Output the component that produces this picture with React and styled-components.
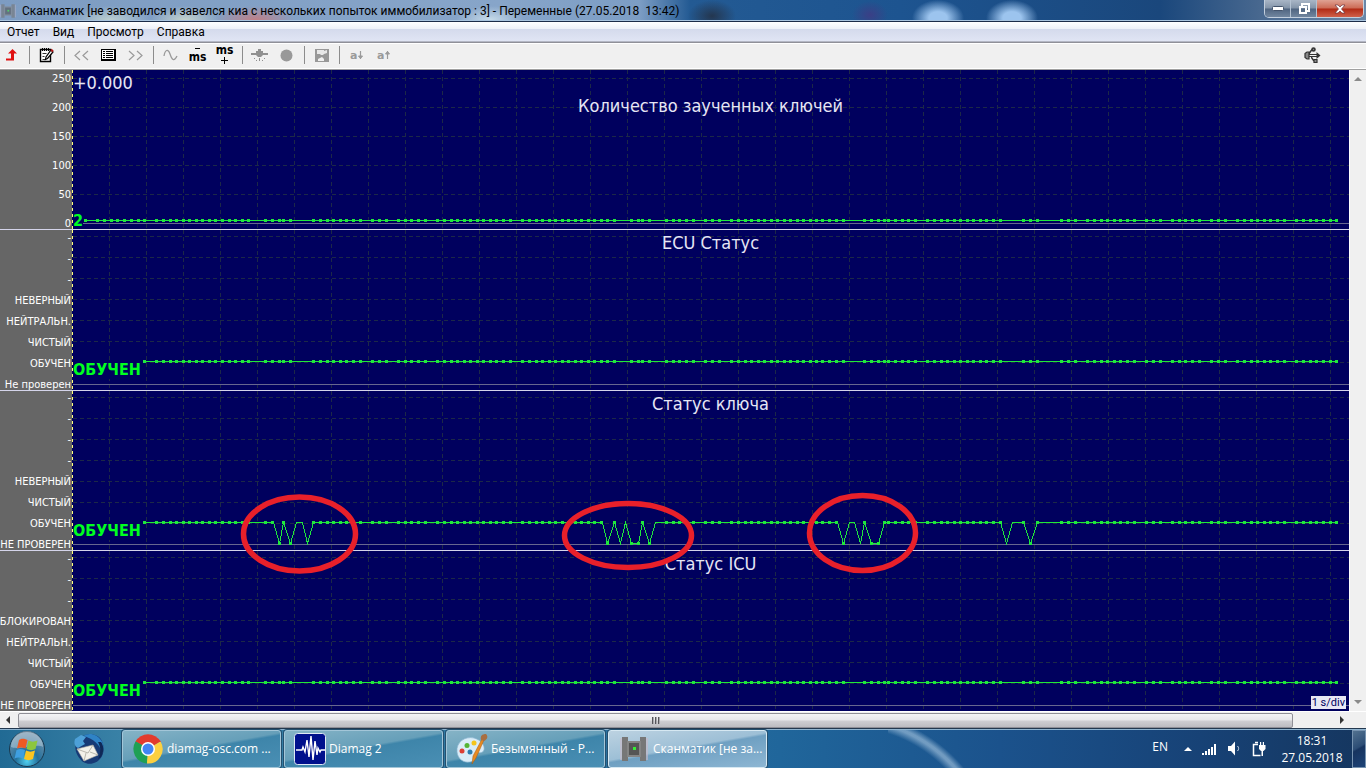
import React from "react";
import styled, { createGlobalStyle } from "styled-components";

const GlobalStyle = createGlobalStyle`
  * {
    box-sizing: border-box;
  }
  body {
    margin: 0;
    background: #00005e;
    font-family: "Open Sans", "Noto Sans", sans-serif;
    font-size: 12px;
  }
  button {
    margin: 0;
    padding: 0;
    border: 0;
    background: none;
    font: inherit;
    color: inherit;
  }
  svg {
    display: block;
  }
`;

const TAHOMA = `"DejaVu Sans Condensed", "DejaVu Sans", sans-serif`;
const NARROW = `Roboto, "Noto Sans", sans-serif`;

const Window = styled.div`
  display: flex;
  flex-direction: column;
  min-height: 100vh;
`;

/* ---------- title bar ---------- */

const TitleBar = styled.header`
  display: flex;
  align-items: flex-start;
  height: 22px;
  overflow: hidden;
  border-bottom: 1px solid #1c2c48;
  box-shadow: inset 0 -1px 0 #a9c4de;
  background:
    radial-gradient(ellipse 24px 16px at 712px 16px, #24364f, transparent),
    radial-gradient(ellipse 18px 14px at 870px 15px, #3a3f86, transparent),
    radial-gradient(ellipse 26px 18px at 938px 18px, #9cc4ee 35%, transparent),
    radial-gradient(ellipse 26px 18px at 1012px 18px, #9cc4ee 35%, transparent),
    radial-gradient(ellipse 40px 14px at 255px 20px, #c07f86, transparent),
    radial-gradient(ellipse 40px 14px at 110px 20px, #bccfd0, transparent),
    radial-gradient(ellipse 34px 14px at 185px 20px, #c5d3cc, transparent),
    radial-gradient(ellipse 34px 14px at 490px 20px, #c8dcea, transparent),
    linear-gradient(
      90deg,
      #7d9cc2 0,
      #87a5c9 500px,
      #7c9dc4 640px,
      #235a93 690px,
      #1d5490 900px,
      #1a477c 1160px,
      #48688f 1260px,
      #6a87a8 100%
    );
`;

const Caption = styled.h1`
  flex: 1;
  margin: 0 0 0 6px;
  color: #000;
  font-family: ${NARROW};
  font-size: 12px;
  font-weight: 400;
  line-height: 22px;
  white-space: pre;
`;

const AppIcon = styled.span`
  margin-top: 3px;
  opacity: 0.6;
`;

const CaptionButtons = styled.div`
  display: flex;
  height: 18px;
  margin-right: 2px;
  border: 1px solid #c3cfdd;
  border-top: 0;
  border-radius: 0 0 5px 5px;
  overflow: hidden;
`;

const CaptionButton = styled.button`
  display: flex;
  align-items: center;
  justify-content: center;
  width: ${(p) => (p.$close ? 46 : 26)}px;
  border-right: ${(p) => (p.$close ? "0" : "1px solid #b4c2d2")};
  background: ${(p) =>
    p.$close
      ? "linear-gradient(#dfa293 0, #cc6a55 48%, #b12a15 52%, #d0604a 100%)"
      : "linear-gradient(#a9b6c6 0, #8394a9 48%, #4f6480 52%, #71869f 100%)"};
`;

/* ---------- menu and toolbar ---------- */

const MenuBar = styled.nav`
  display: flex;
  height: 20px;
  padding-left: 1px;
  border-bottom: 1px solid #b4b7c4;
  background: linear-gradient(#fff 0, #eef1f8 35%, #d4daec 36%, #e0e5f4 100%);
`;

const MenuItem = styled.button`
  padding: 0 6px;
  margin-right: 1px;
  color: #000;
  font-family: ${NARROW};
  line-height: 20px;
`;

const Toolbar = styled.div`
  display: flex;
  align-items: center;
  height: 28px;
  padding-bottom: 2px;
  border-top: 1px solid #8f9098;
  border-bottom: 1px solid #a0a0a0;
  box-shadow: inset 0 1px 0 #fff, inset 0 -1px 0 #fff;
  background: #f0f0f0;
`;

const ToolGroup = styled.div`
  display: flex;
  align-items: center;
  flex: 1;
  margin-left: -2px;
`;

const ToolButton = styled.button`
  display: flex;
  align-items: center;
  justify-content: center;
  width: 27px;
  height: 24px;
`;

const ToolSeparator = styled.span`
  width: 8px;
  height: 18px;
  background: linear-gradient(#8c8c8c, #8c8c8c) center / 1px 100% no-repeat;
`;

const UsbStatus = styled.div`
  margin-right: 45px;
`;

/* ---------- chart ---------- */

const Workspace = styled.main`
  display: flex;
  flex: 1;
`;

const Chart = styled.div`
  position: relative;
  display: flex;
  flex: 1;
  flex-direction: column;
  min-width: 0;
  background: #00005e;
`;

const Panel = styled.section`
  display: flex;
  flex: ${(p) => (p.$last ? "1 0 auto" : "none")};
  height: ${(p) => p.$height}px;
  border-bottom: ${(p) => (p.$last ? "0" : "1px solid #d4d4ea")};
`;

const Axis = styled.ul`
  display: flex;
  flex-direction: column;
  justify-content: flex-end;
  width: 72px;
  margin: 0;
  padding: 0 1px 0 0;
  overflow: hidden;
  list-style: none;
  background: #666;
  color: #fff;
  font-family: ${TAHOMA};
  font-size: 11px;
  line-height: 10px;
`;

const Tick = styled.li`
  flex: none;
  display: flex;
  justify-content: flex-end;
  height: ${(p) => p.$step}px;
  padding-top: ${(p) => Math.ceil((p.$step - 10) / 2)}px;
  white-space: nowrap;

  &:last-child {
    height: auto;
  }
`;

const Plot = styled.div`
  position: relative;
  flex: 1;
  min-width: 0;
  overflow: hidden;
`;

const Canvas = styled.svg`
  position: absolute;
  inset: 0;
  width: 100%;
  height: 100%;
`;

const CursorTime = styled.div`
  position: relative;
  height: 23px;
  padding-left: 1px;
  color: #e6e6f5;
  font-family: ${TAHOMA};
  font-size: 18px;
  line-height: 25px;
`;

const PanelTitle = styled.h2`
  position: relative;
  margin: 0;
  color: #e6e6f5;
  font-family: ${TAHOMA};
  font-size: 18px;
  font-weight: 400;
  line-height: 25px;
  text-align: center;
`;

const CurrentValue = styled.div`
  position: absolute;
  top: ${(p) => p.$top}px;
  left: 1px;
  background: #00005e;
  color: #00ff20;
  font-family: ${TAHOMA};
  font-size: 16px;
  font-weight: 700;
  line-height: 18px;
`;

const ScaleBadge = styled.div`
  position: absolute;
  right: 3px;
  bottom: 2px;
  padding: 0 1px;
  background: #e8e8f4;
  color: #00005e;
  font-family: ${NARROW};
  font-size: 11px;
  line-height: 13px;
`;

const Marks = styled.svg`
  position: absolute;
  inset: 0;
  width: 100%;
  height: 100%;
  pointer-events: none;
`;

/* ---------- scroll bars ---------- */

const VScroll = styled.div`
  display: flex;
  flex-direction: column;
  justify-content: space-between;
  align-items: center;
  width: 17px;
  padding: 5px 0;
  border-left: 1px solid #fff;
  background: #f0f0f0;
`;

const HScroll = styled.div`
  display: flex;
  align-items: center;
  height: 17px;
  padding-right: 17px;
  border-top: 1px solid #fff;
  background: #f0f0f0;
`;

const ScrollButton = styled.button`
  display: flex;
  align-items: center;
  justify-content: center;
  width: 17px;
  height: 8px;
`;

const Track = styled.div`
  flex: 1;
  padding: 0 39px 0 1px;
`;

const Thumb = styled.div`
  display: flex;
  align-items: center;
  justify-content: center;
  gap: 1px;
  height: 15px;
  border: 1px solid #8f8f96;
  border-radius: 2px;
  background: linear-gradient(#f4f4f5 0, #e6e6e9 48%, #cfcfd3 52%, #bcbcc1 100%);
`;

const Grip = styled.span`
  width: 2px;
  height: 7px;
  background: linear-gradient(90deg, #55555a 50%, #a8a8ad 50%);
`;

/* ---------- taskbar ---------- */

const Taskbar = styled.footer`
  display: flex;
  align-items: center;
  height: 40px;
  border-top: 1px solid #22384f;
  box-shadow: inset 0 1px 0 #8fb4d0;
  overflow: hidden;
  background:
    radial-gradient(
        circle at -42px 136px,
        transparent 138px,
        rgba(170, 200, 225, 0.6) 145px,
        rgba(170, 200, 225, 0.6) 147px,
        transparent 153px
      )
      888px 0 / 90px 40px no-repeat,
    linear-gradient(
      90deg,
      #216a94 0,
      #3981a6 120px,
      #2e77a2 500px,
      #20669b 780px,
      #1b528c 1000px,
      #174276 1200px,
      #15365f 100%
    );
  color: #fff;
`;

const OrbButton = styled.button`
  width: 54px;
  padding-left: 8px;
`;

const PinnedButton = styled.button`
  width: 68px;
  padding-left: 19px;
`;

const TaskList = styled.div`
  display: flex;
  flex: 1;
  gap: 3px;
`;

const TaskButton = styled.button`
  display: flex;
  align-items: center;
  gap: 3px;
  width: 159px;
  height: 38px;
  padding: 0 0 0 9px;
  border: 1px solid ${(p) => (p.$active ? "#d6e8f2" : "#a3c6d8")};
  border-radius: 3px;
  box-shadow: 0 0 0 1px #24506f;
  background: ${(p) =>
    p.$active
      ? "linear-gradient(170deg, #bcd2e1 0, #9dbfd6 46%, #6fa0c2 50%, #8db6d3 100%)"
      : "linear-gradient(170deg, #85b3c6 0, #669fb9 46%, #3e85aa 50%, #4a8fb4 100%)"};
  text-align: left;
  white-space: nowrap;
`;

const TaskIcon = styled.span`
  display: flex;
  justify-content: center;
  width: 32px;
`;

const Tray = styled.div`
  display: flex;
  align-items: center;
  gap: 10px;
`;

const Language = styled.button`
  margin: 0 6px 5px 0;
`;

const Clock = styled.time`
  width: 80px;
  margin-left: 6px;
  line-height: 17px;
  text-align: center;
`;

const ShowDesktop = styled.button`
  width: 14px;
  height: 38px;
  border: 1px solid #7793b0;
  background: linear-gradient(150deg, #52718f 0, #2c4d75 45%, #17345f 50%, #1d4377);
`;

/* ---------- data ---------- */

const PLOT_X = 72;

// sample positions along the time axis
const SAMPLES = [
  144, 156, 163, 170, 176, 183, 189, 196, 202, 209, 215, 222, 229, 235, 242, 248,
  265, 272, 279, 283, 290, 313, 320, 327, 333, 340, 346, 353, 360, 372, 379, 386,
  398, 405, 411, 418, 425, 437, 444, 451, 457, 464, 470, 477, 483, 490, 496, 503,
  510, 522, 529, 536, 542, 549, 555, 562, 568, 575, 581, 588, 594, 601, 607, 614,
  631, 638, 642, 649, 666, 673, 679, 686, 693, 705, 712, 719, 731, 738, 745, 751,
  758, 764, 771, 777, 784, 790, 797, 803, 810, 816, 822, 829, 836, 843, 864, 871,
  878, 884, 888, 895, 902, 908, 915, 927, 934, 941, 947, 954, 960, 967, 973, 980,
  986, 993, 1000, 1023, 1030, 1037, 1061, 1068, 1075, 1087, 1094, 1101, 1107,
  1114, 1120, 1127, 1134, 1146, 1153, 1160, 1172, 1179, 1185, 1192, 1199, 1211,
  1218, 1225, 1237, 1244, 1251, 1257, 1264, 1270, 1277, 1284, 1296, 1303, 1310,
  1316, 1323, 1330, 1336,
];

const EARLY_SAMPLES = [85, 97, 104, 111, 117, 124, 131, 138];

// samples where the key was not recognised
const LOW = [279, 290, 607, 631, 638, 649, 843, 871, 878, 1030];

const KEY_PATH = [
  [142, 0], [273, 0], [279, 1], [283, 0], [290, 1], [296, 0], [302, 0], [307, 1],
  [313, 0], [602, 0], [607, 1], [614, 0], [620, 1], [625, 0], [631, 1], [638, 1],
  [642, 0], [649, 1], [655, 0], [837, 0], [843, 1], [849, 0], [854, 0], [860, 1],
  [864, 0], [871, 1], [878, 1], [884, 0], [1000, 0], [1006, 1], [1012, 0],
  [1023, 0], [1030, 1], [1037, 0], [1337, 0],
];

const PANELS = [
  {
    title: "Количество заученных ключей",
    ticks: ["250", "200", "150", "100", "50", "0"],
    height: 160,
    step: 29,
    firstLine: 8,
    zero: 153,
    trace: 150,
    value: "2",
    valueTop: 142,
    samples: [...EARLY_SAMPLES, ...SAMPLES],
  },
  {
    title: "ECU Статус",
    ticks: ["-", "-", "-", "НЕВЕРНЫЙ", "НЕЙТРАЛЬН.", "ЧИСТЫЙ", "ОБУЧЕН", "Не проверен"],
    height: 161,
    step: 21,
    firstLine: 6,
    zero: 154,
    trace: 131,
    value: "ОБУЧЕН",
    valueTop: 131,
    samples: SAMPLES,
  },
  {
    title: "Статус ключа",
    ticks: ["-", "-", "-", "-", "НЕВЕРНЫЙ", "ЧИСТЫЙ", "ОБУЧЕН", "НЕ ПРОВЕРЕН"],
    height: 160,
    step: 21,
    firstLine: 6,
    zero: 153,
    trace: 131,
    value: "ОБУЧЕН",
    valueTop: 131,
    samples: SAMPLES,
    path: KEY_PATH,
    low: LOW,
  },
  {
    title: "Статус ICU",
    ticks: ["-", "-", "-", "БЛОКИРОВАН", "НЕЙТРАЛЬН.", "ЧИСТЫЙ", "ОБУЧЕН", "НЕ ПРОВЕРЕН"],
    height: 160,
    step: 21,
    firstLine: 6,
    zero: 154,
    trace: 131,
    value: "ОБУЧЕН",
    valueTop: 131,
    samples: SAMPLES,
  },
];

/* ---------- icons ---------- */

const ScannerIcon = ({ size }) => (
  <svg width={size} height={size} viewBox="0 0 28 28">
    <path d="M2 2h6v24H2zM20 2h6v24h-6z" fill="#777" />
    <path d="M0 3h2v22H0zM26 3h2v22h-2z" fill="#c9b9c6" opacity=".6" />
    <path d="M7 6h14v16H7z" fill="#858585" />
    <path d="M9 8h10v12H9z" fill="#555" />
    <path d="M13 12h3v3h-3z" fill="#35f035" />
  </svg>
);

const PencilNoteIcon = () => (
  <svg width="15" height="16" viewBox="0 0 15 16" fill="none" stroke="#000">
    <path d="M1.500 2.500h10v12h-10z" fill="#fff" strokeWidth="1.400" />
    <path d="M3.500 1v3M5.500 1v3M7.500 1v3M9.500 1v3" />
    <path d="M3.500 6.500h4M3.500 9.500h2M3.500 12.500h3" strokeWidth=".8" />
    <path d="M12 3l2 2-5.500 6.500-2 1 .5-2.500z" fill="#fff" strokeWidth="1.200" />
    <path d="M12 2.500l2 2" stroke="#b01818" strokeWidth="2" />
  </svg>
);

const ArrowUpIcon = () => (
  <svg width="11" height="12" viewBox="0 0 11 12">
    <path d="M6.500 0l4.500 4.500h-3v7H0v-2h5v-5H2z" fill="#e01010" />
  </svg>
);

const ListIcon = () => (
  <svg width="15" height="12" viewBox="0 0 15 12" shapeRendering="crispEdges">
    <path d="M0 0h15v12H0z" fill="#000" />
    <path d="M1 1h12v9H1z" fill="#fff" />
    <path d="M2 2h2v1H2zM5 2h7v1H5zM2 4h2v1H2zM5 4h7v1H5zM2 6h2v1H2zM5 6h7v1H5zM2 8h2v1H2zM5 8h7v1H5z" fill="#000" />
  </svg>
);

const ChevronsIcon = ({ right }) => (
  <svg width="15" height="11" viewBox="0 0 15 11" fill="none" stroke="#9a9a9a" strokeWidth="1.200">
    {right ? (
      <path d="M1 1l5 4.500L1 10M9 1l5 4.500L9 10" />
    ) : (
      <path d="M6 1L1 5.500 6 10M14 1L9 5.500l5 4.500" />
    )}
  </svg>
);

const WaveIcon = () => (
  <svg width="15" height="13" viewBox="0 0 15 13" fill="none" stroke="#9a9a9a" strokeWidth="1.300">
    <path d="M1 7C2 1 5 -1 7 5s4 8 7 2" />
  </svg>
);

const MsWrap = styled.span`
  display: flex;
  flex-direction: ${(p) => (p.$plus ? "column-reverse" : "column")};
  align-items: center;
  color: #000;
  font-family: ${TAHOMA};
  font-size: 12px;
  font-weight: 700;
  line-height: 10px;
`;

const MinusPlus = ({ plus }) => (
  <svg width="7" height={plus ? 10 : 4} viewBox={plus ? "0 0 7 10" : "0 0 7 4"} shapeRendering="crispEdges">
    <path d={plus ? "M0 5h7v1H0zM3 2h1v7H3z" : "M1 0h5v1H1z"} fill="#000" />
  </svg>
);

const ProbeIcon = () => (
  <svg width="17" height="13" viewBox="0 0 17 13" fill="#909090">
    <path d="M7 0h3v2h2v2h5v2h-5l-2 2H7L5 6H0V4h5V2h2z" />
    <path d="M3 9h1v1H3zM5 11h1v1H5zM8 9h1v3H8zM11 11h1v1h-1zM13 9h1v1h-1z" />
  </svg>
);

const SaveIcon = () => (
  <svg width="14" height="13" viewBox="0 0 14 13">
    <path d="M0 0h14v13H0z" fill="#989898" />
    <path d="M2 1h7v1l3-1v3L9 5 8 6H6L5 5H2z" fill="#e8e8e8" />
    <path d="M3 10l4-2 2 2v2H3z" fill="#f0f0f0" />
  </svg>
);

const LetterArrowIcon = ({ up }) => (
  <svg width="14" height="11" viewBox="0 0 14 11" fill="none" stroke="#9a9a9a">
    <path d="M10.500 1v8" strokeWidth="1.200" />
    <path d={up ? "M8.500 4l2-2.500 2 2.500z" : "M8.500 6l2 2.500 2-2.500z"} fill="#9a9a9a" />
    <text x="0" y="9" fill="#9a9a9a" stroke="none" fontSize="11" fontFamily="DejaVu Sans" fontWeight="700">
      a
    </text>
  </svg>
);

const UsbIcon = () => (
  <svg width="17" height="17" viewBox="0 0 17 17" fill="none" stroke="#333" strokeWidth="1.600">
    <path d="M4 7.500h10M4 9.500h10" strokeWidth="1" />
    <path d="M4 7c2.500 0 2-4.500 5-4.500M7 10c1 0 1.500 4 4 4" />
    <path d="M1 6.500L3 5h2v7H3L1 10.500z" fill="#888" strokeWidth="1.200" />
    <path d="M12.500 5l4 3.500-4 3.500z" fill="#333" stroke="none" />
    <circle cx="9.500" cy="2.500" r="1.500" fill="#888" />
    <path d="M10 12.500h3v3h-3z" fill="#888" strokeWidth="1.200" />
  </svg>
);

const TriangleIcon = ({ d, fill = "#333" }) => (
  <svg width="8" height="8" viewBox="0 0 8 8">
    <path d={d} fill={fill} />
  </svg>
);

const StartOrb = () => (
  <svg width="38" height="38" viewBox="0 0 38 38">
    <defs>
      <radialGradient id="orb" cx="50%" cy="85%" r="80%">
        <stop offset="0" stopColor="#4fd0f0" />
        <stop offset=".4" stopColor="#23709c" />
        <stop offset="1" stopColor="#7895ab" />
      </radialGradient>
    </defs>
    <circle cx="19" cy="19" r="17.500" fill="url(#orb)" stroke="#18384f" />
    <path d="M3 17a16 16 0 0 1 32 0c-8-4-22 4-32 0z" fill="#c9dbe6" opacity=".45" />
    <path d="M11 10c3-2 5-1.500 8.500 0l-2 8.500c-3.500-1.500-5.500-1.500-8.500 0z" fill="#ee5a24" />
    <path d="M20.500 10.500c3 1.500 5.500 1.500 9 0l-2 8.500c-3 1.500-6 1.500-9 0z" fill="#8cc63e" />
    <path d="M8.500 20c3-1.500 5-1.500 8.500 0l-2 8.500c-3.500-1.500-5.500-1.500-8.500 0z" fill="#3f9fe0" />
    <path d="M18 20.500c3 1.500 5.500 1.500 9 0l-2 8.500c-3 1.500-6 1.500-9 0z" fill="#fcc520" />
  </svg>
);

const MailBirdIcon = () => (
  <svg width="32" height="32" viewBox="0 0 32 32">
    <path d="M4 8C8 0 22 -1 27 5c5 6 5 17-1 22-5 5-14 5-18 0-4-4-8-12-4-19z" fill="#173a76" />
    <path d="M10 3c6-4 14-2 18 4 3 4 3 9 1 14C28 12 20 5 10 3z" fill="#2f83c6" />
    <path d="M25 9c3 5 3 11 0 17l3-2c3-5 3-11 0-15z" fill="#0f2856" />
    <path d="M2 6l6-4 5 2-3 4 2 3-7 4C1 13 1 9 2 6z" fill="#4da0d8" />
    <path d="M4 16l16-4 5 10-14 6z" fill="#f3f1ea" stroke="#b3b0a4" strokeWidth=".6" />
    <path d="M4 16l11 4 5-8M11 28l2-8M25 22l-8-3" fill="none" stroke="#aaa89e" strokeWidth=".8" />
  </svg>
);

const ChromeIcon = () => (
  <svg width="30" height="30" viewBox="0 0 30 30">
    <path d="M15 15L2.500 7.500A14.500 14.500 0 0 1 27.500 7.500z" fill="#e23b2e" />
    <path d="M15 15l-1 14.500A14.500 14.500 0 0 1 2.500 7.500z" fill="#1fa055" />
    <path d="M15 15l12.500-7.500A14.500 14.500 0 0 1 14 29.500z" fill="#fcd040" />
    <path d="M15 8h12.800a14.500 14.500 0 0 0-.8-1.500z" fill="#e23b2e" />
    <path d="M2.500 7.500l6.500 11 3-6z" fill="#1fa055" />
    <path d="M14 29.500l7-11-5-1z" fill="#fcd040" />
    <circle cx="15" cy="15" r="7" fill="#fff" />
    <circle cx="15" cy="15" r="5.500" fill="#4285f4" />
  </svg>
);

const DiamagIcon = () => (
  <svg width="32" height="32" viewBox="0 0 32 32">
    <rect x=".5" y=".5" width="31" height="31" rx="3" fill="#00108c" stroke="#dfe8f4" />
    <path
      d="M2 17h6l1-3 2 5 2-12 2 17 2-21 2 24 2-19 2 14 1-7 2 4 1-2h4"
      fill="none"
      stroke="#fff"
      strokeWidth="1.400"
    />
  </svg>
);

const PaintIcon = () => (
  <svg width="32" height="32" viewBox="0 0 32 32">
    <path d="M1 19C0 9 9 3 18 5c7 2 11 7 10 12-2 5-7 1-9 4-2 4 1 7-5 8C7 30 2 26 1 19z" fill="#d9ecf8" stroke="#8ab4d0" strokeWidth=".7" />
    <circle cx="6" cy="18" r="2.500" fill="#dd3f35" />
    <circle cx="11" cy="12.500" r="2.500" fill="#55b535" />
    <circle cx="18" cy="10" r="2.500" fill="#f5c51c" />
    <circle cx="14" cy="19" r="2.500" fill="#2d7db0" />
    <path d="M16 31l1-8 9-17 2 1-8 18z" fill="#e88a22" stroke="#a65d10" strokeWidth=".5" />
    <path d="M25 7c-1-4 1-6 5-6 2 2 2 5-2 7z" fill="#a86f42" />
  </svg>
);

const SignalIcon = () => (
  <svg width="16" height="13" viewBox="0 0 16 13" fill="#fff" shapeRendering="crispEdges">
    <path d="M0 11h2v2H0zM3 9h2v4H3zM6 7h2v6H6zM9 5h2v8H9zM12 2h2v11h-2z" />
  </svg>
);

const SpeakerIcon = () => (
  <svg width="14" height="15" viewBox="0 0 14 15">
    <path d="M0 5h3l4-4.500v14L3 10H0z" fill="#fff" />
    <path d="M9.500 5c1.500 1.500 1.500 3.500 0 5" stroke="#cfdcea" fill="none" />
  </svg>
);

const BatteryIcon = () => (
  <svg width="14" height="16" viewBox="0 0 14 16">
    <path d="M6 3.500H1.500v11h7M3 1.500h3" fill="none" stroke="#fff" strokeWidth="1.500" />
    <path d="M8 1h1.200v3h1.600V1H12v3h1.500v4l-2 2H11v5H9.500v-5H9L7 8V4h1z" fill="#fff" />
  </svg>
);

/* ---------- components ---------- */

const SignalPanel = ({ panel, last, children }) => {
  const { samples, path, low = [], trace, step, firstLine, zero, ticks } = panel;
  const start = samples[0] - 1;
  const points = (path || [[start, 0], [1337, 0]])
    .map(([x, level]) => `${x - PLOT_X + 0.5},${trace + 0.5 + level * 21}`)
    .join(" ");

  return (
    <Panel $height={panel.height} $last={last}>
      <Axis>
        {ticks.map((tick, i) => (
          <Tick key={i} $step={step}>
            {tick}
          </Tick>
        ))}
      </Axis>
      <Plot>
        <Canvas shapeRendering="crispEdges">
          <defs>
            <pattern id={`grid${step}`} width="37" height="7" patternUnits="userSpaceOnUse">
              <path d="M0 0h1v4H0z" fill="#1c2848" />
            </pattern>
          </defs>
          <rect width="100%" height="100%" fill={`url(#grid${step})`} />
          {ticks.slice(0, -1).map((_, i) => (
            <line
              key={i}
              x1="1"
              x2="100%"
              y1={firstLine + i * step + 0.5}
              y2={firstLine + i * step + 0.5}
              stroke="#1c2848"
              strokeDasharray="4 3"
            />
          ))}
          <line x1="0" x2="100%" y1={zero + 0.5} y2={zero + 0.5} stroke="#67678f" />
          <line x1="0.5" x2="0.5" y1="0" y2="100%" stroke="#00005e" />
          <line x1="0.5" x2="0.5" y1="0" y2="100%" stroke="#ffff80" strokeDasharray="3 3" />
          <polyline points={points} fill="none" stroke="#1fe83c" />
          {samples.map((x) => (
            <rect
              key={x}
              x={x - PLOT_X - 1}
              y={trace - 1 + (low.includes(x) ? 21 : 0)}
              width="3"
              height="3"
              fill="#1fe83c"
            />
          ))}
        </Canvas>
        {children}
        <PanelTitle>{panel.title}</PanelTitle>
        <CurrentValue $top={panel.valueTop}>{panel.value}</CurrentValue>
        {last && <ScaleBadge>1 s/div</ScaleBadge>}
      </Plot>
    </Panel>
  );
};

const Task = ({ icon, active, children }) => (
  <TaskButton $active={active}>
    <TaskIcon>{icon}</TaskIcon>
    {children}
  </TaskButton>
);

export default function App() {
  return (
    <Window>
      <GlobalStyle />
      <TitleBar>
        <AppIcon>
          <ScannerIcon size={16} />
        </AppIcon>
        <Caption>
          {"Сканматик [не заводился и завелся киа с нескольких попыток иммобилизатор : 3] - Переменные (27.05.2018  13:42)"}
        </Caption>
        <CaptionButtons>
          <CaptionButton aria-label="Свернуть">
            <svg width="12" height="5" viewBox="0 0 12 5">
              <rect x=".5" y=".5" width="11" height="4" rx="1" fill="#fff" stroke="#44546c" />
            </svg>
          </CaptionButton>
          <CaptionButton aria-label="Восстановить">
            <svg width="12" height="12" viewBox="0 0 12 12" fill="none" stroke="#fff" strokeWidth="2">
              <path d="M4 3V1h7v7H9" />
              <path d="M2 4h6v6H2z" />
            </svg>
          </CaptionButton>
          <CaptionButton $close aria-label="Закрыть">
            <svg width="12" height="10" viewBox="0 0 12 10">
              <path d="M1 1h3l2 2 2-2h3L7.500 5 11 9H8L6 7 4 9H1l3.500-4z" fill="#fff" stroke="#6b3440" strokeWidth=".7" />
            </svg>
          </CaptionButton>
        </CaptionButtons>
      </TitleBar>

      <MenuBar>
        <MenuItem>Отчет</MenuItem>
        <MenuItem>Вид</MenuItem>
        <MenuItem>Просмотр</MenuItem>
        <MenuItem>Справка</MenuItem>
      </MenuBar>

      <Toolbar>
        <ToolGroup>
          <ToolButton aria-label="Выход"><ArrowUpIcon /></ToolButton>
          <ToolSeparator />
          <ToolButton aria-label="Заметка"><PencilNoteIcon /></ToolButton>
          <ToolSeparator />
          <ToolButton aria-label="Назад"><ChevronsIcon /></ToolButton>
          <ToolButton aria-label="Список"><ListIcon /></ToolButton>
          <ToolButton aria-label="Вперед"><ChevronsIcon right /></ToolButton>
          <ToolSeparator />
          <ToolButton aria-label="График"><WaveIcon /></ToolButton>
          <ToolButton>
            <MsWrap>
              <MinusPlus />
              ms
            </MsWrap>
          </ToolButton>
          <ToolButton>
            <MsWrap $plus>
              <MinusPlus plus />
              ms
            </MsWrap>
          </ToolButton>
          <ToolSeparator />
          <ToolButton aria-label="Датчик"><ProbeIcon /></ToolButton>
          <ToolButton aria-label="Запись">
            <svg width="13" height="13" viewBox="0 0 13 13">
              <circle cx="6.500" cy="6.500" r="6" fill="#999" />
            </svg>
          </ToolButton>
          <ToolSeparator />
          <ToolButton aria-label="Сохранить"><SaveIcon /></ToolButton>
          <ToolSeparator />
          <ToolButton><LetterArrowIcon /></ToolButton>
          <ToolButton><LetterArrowIcon up /></ToolButton>
        </ToolGroup>
        <UsbStatus><UsbIcon /></UsbStatus>
      </Toolbar>

      <Workspace>
        <Chart>
          {PANELS.map((panel, i) => (
            <SignalPanel key={panel.title} panel={panel} last={i === PANELS.length - 1}>
              {i === 0 && <CursorTime>+0.000</CursorTime>}
            </SignalPanel>
          ))}
          <Marks fill="none" stroke="#e8202a" strokeWidth="5.500">
            <ellipse cx="299.500" cy="464" rx="56" ry="37" />
            <ellipse cx="628" cy="465.500" rx="63.500" ry="32" />
            <ellipse cx="862.500" cy="463" rx="53" ry="37.500" />
          </Marks>
        </Chart>
        <VScroll>
          <ScrollButton aria-label="Вверх">
            <TriangleIcon d="M0 6l4-4 4 4z" fill="#8a8a8a" />
          </ScrollButton>
          <ScrollButton aria-label="Вниз">
            <TriangleIcon d="M0 2l4 4 4-4z" fill="#8a8a8a" />
          </ScrollButton>
        </VScroll>
      </Workspace>

      <HScroll>
        <ScrollButton aria-label="Влево">
          <TriangleIcon d="M5 0v8L1 4z" />
        </ScrollButton>
        <Track>
          <Thumb>
            <Grip />
            <Grip />
            <Grip />
          </Thumb>
        </Track>
        <ScrollButton aria-label="Вправо">
          <TriangleIcon d="M3 0v8l4-4z" />
        </ScrollButton>
      </HScroll>

      <Taskbar>
        <OrbButton aria-label="Пуск"><StartOrb /></OrbButton>
        <PinnedButton aria-label="Почта"><MailBirdIcon /></PinnedButton>
        <TaskList>
          <Task icon={<ChromeIcon />}>diamag-osc.com ...</Task>
          <Task icon={<DiamagIcon />}>Diamag 2</Task>
          <Task icon={<PaintIcon />}>Безымянный - P...</Task>
          <Task icon={<ScannerIcon size={28} />} active>Сканматик [не за...</Task>
        </TaskList>
        <Tray>
          <Language>EN</Language>
          <TriangleIcon d="M0 6l4-4 4 4z" fill="#fff" />
          <SignalIcon />
          <SpeakerIcon />
          <BatteryIcon />
        </Tray>
        <Clock>
          18:31
          <br />
          27.05.2018
        </Clock>
        <ShowDesktop aria-label="Показать рабочий стол" />
      </Taskbar>
    </Window>
  );
}
